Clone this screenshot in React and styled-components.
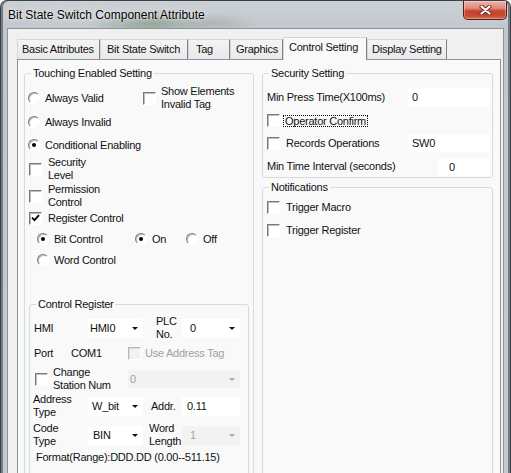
import React from "react";
import styled, { createGlobalStyle } from "styled-components";

const GlobalStyle = createGlobalStyle`
  html, body {
    margin: 0;
    padding: 0;
    background: #ffffff;
  }
  body {
    font-family: "Liberation Sans", Arial, sans-serif;
    font-size: 11px;
    letter-spacing: -0.25px;
    color: #111;
  }
  * {
    box-sizing: border-box;
  }
`;

const Window = styled.div`
  width: 511px;
  height: 473px;
  overflow: hidden;
  display: flex;
  flex-direction: column;
  border: 1px solid #3b4046;
  border-bottom: none;
  border-radius: 7px 7px 0 0;
  background:
    radial-gradient(ellipse 60px 14px at 150px 22px, rgba(80, 110, 70, 0.4), rgba(80, 110, 70, 0)),
    radial-gradient(ellipse 40px 10px at 215px 22px, rgba(90, 95, 90, 0.2), rgba(90, 95, 90, 0)),
    linear-gradient(180deg, #ccd1d6 0px, #c1c7cc 28px, #c6cbd0 100%);
  box-shadow: inset 2px 0 0 #767c82, inset -2px 0 0 #767c82;
`;

const TitleBar = styled.div`
  flex: none;
  height: 27px;
  display: flex;
  align-items: center;
  justify-content: space-between;
  padding: 0 3px 0 7px;
`;

const Title = styled.span`
  font-size: 12px;
  letter-spacing: 0;
  color: #000;
  text-shadow: 0 0 6px rgba(255, 255, 255, 0.9), 0 0 2px rgba(255, 255, 255, 0.8);
`;

const CloseButton = styled.div`
  align-self: flex-start;
  width: 44px;
  height: 19px;
  display: flex;
  align-items: center;
  justify-content: center;
  border: 1px solid #4d2019;
  border-top: none;
  border-radius: 0 0 5px 5px;
  background: linear-gradient(180deg, #ecb4a8 0%, #dd8a7a 40%, #c8412a 56%, #c9482f 80%, #d86c50 100%);
  box-shadow: inset 0 0 0 1px rgba(255, 255, 255, 0.3);
`;

const FrameBody = styled.div`
  flex: 1;
  min-height: 0;
  display: flex;
  padding: 0 6px;
`;

const Client = styled.div`
  flex: 1;
  min-width: 0;
  display: flex;
  flex-direction: column;
  background: #f0f0f0;
  border: 1px solid #8c939a;
  border-bottom: none;
  padding: 8px 2px 0 9px;
`;

const TabStrip = styled.div`
  flex: none;
  height: 22px;
  display: flex;
  align-items: flex-end;
`;

const Tab = styled.div`
  flex: none;
  position: relative;
  width: ${(p) => p.$w}px;
  height: ${(p) => (p.$active ? 23 : 20)}px;
  margin-bottom: ${(p) => (p.$active ? -1 : 0)}px;
  z-index: ${(p) => (p.$active ? 1 : 0)};
  padding-left: ${(p) => p.$pad}px;
  border: 1px solid;
  border-bottom: none;
  border-color: #d2d5d9 #7e8389 transparent #d2d5d9;
  background: ${(p) => (p.$active ? "#f9f9f9" : "linear-gradient(180deg, #f4f4f4, #e9e9e9)")};
  line-height: ${(p) => (p.$active ? 19 : 18)}px;
  white-space: nowrap;
`;

const Panel = styled.div`
  flex: 1;
  min-height: 0;
  overflow: hidden;
  border: 1px solid #8e9399;
  border-bottom: none;
  background: #f9f9f9;
  padding: 7px 7px 0 6px;
  display: grid;
  grid-template-columns: 230px 231px;
  column-gap: 8px;
  align-items: start;
`;

const Column = styled.div`
  display: flex;
  flex-direction: column;
`;

const GroupBox = styled.fieldset`
  margin: ${(p) => p.$m || "0"};
  padding: 0;
  min-width: 0;
  border: 1px solid #d3dce2;
  border-radius: 3px;
  ${(p) => (p.$h ? `height: ${p.$h}px;` : "")}
`;

const Legend = styled.legend`
  margin-left: 6px;
  padding: 0 2px;
  line-height: 13px;
`;

const GroupBody = styled.div`
  padding: ${(p) => p.$pad};
  display: flex;
  flex-direction: column;
`;

const Row = styled.div`
  display: flex;
  align-items: center;
  justify-content: ${(p) => (p.$between ? "space-between" : "flex-start")};
  height: ${(p) => p.$h}px;
  padding-top: ${(p) => p.$pt || 0}px;
`;

const Text = styled.span`
  flex: none;
  width: ${(p) => (p.$w ? `${p.$w}px` : "auto")};
  padding-left: ${(p) => p.$pad || 0}px;
  margin-left: ${(p) => p.$ml || 0}px;
  line-height: 13px;
  white-space: nowrap;
`;

const Option = styled.label`
  flex: none;
  display: flex;
  align-items: center;
  gap: ${(p) => p.$gap}px;
  width: ${(p) => (p.$w ? `${p.$w}px` : "auto")};
  margin-left: ${(p) => p.$ml || 0}px;
  line-height: 13px;
  white-space: nowrap;
  color: ${(p) => (p.$disabled ? "#a0a0a0" : "inherit")};
`;

const RadioCircle = styled.span`
  flex: none;
  width: 12px;
  height: 12px;
  border-radius: 50%;
  border: 1px solid;
  border-color: #7c7c7c #ffffff #ffffff #7c7c7c;
  background: #fff;
  box-shadow: inset 1px 1px 0 #bdbdbd;
  display: flex;
  align-items: center;
  justify-content: center;

  &::after {
    content: "";
    display: ${(p) => (p.$on ? "block" : "none")};
    width: 4px;
    height: 4px;
    border-radius: 50%;
    background: #000;
  }
`;

const Box = styled.span`
  flex: none;
  width: 13px;
  height: 13px;
  border: 1px solid;
  border-color: ${(p) => (p.$disabled ? "#b6b6b6 #fff #fff #b6b6b6" : "#7a7a7a #fff #fff #7a7a7a")};
  box-shadow: inset 1px 1px 0 ${(p) => (p.$disabled ? "#dcdcdc" : "#bcbcbc")};
  background: ${(p) => (p.$disabled ? "#f2f2f2" : "#fff")};
  display: flex;
  align-items: center;
  justify-content: center;
`;

const Focus = styled.span`
  border: 1px dotted #000;
  padding: 0 1px;
  line-height: 10px;
`;

const Field = styled.div`
  flex: none;
  width: ${(p) => p.$w}px;
  height: ${(p) => p.$h || 19}px;
  display: flex;
  align-items: center;
  justify-content: space-between;
  padding: 0 5px 0 ${(p) => p.$pad || 3}px;
  background: ${(p) => (p.$disabled ? "#f2f2f2" : "#ffffff")};
  color: ${(p) => (p.$disabled ? "#a3a3a3" : "inherit")};
`;

const Arrow = styled.span`
  width: 0;
  height: 0;
  border-left: 3px solid transparent;
  border-right: 3px solid transparent;
  border-top: 3px solid ${(p) => (p.$disabled ? "#a8a8a8" : "#111")};
`;

const Radio = ({ on, children, w, ml }) => (
  <Option $gap={5} $w={w} $ml={ml}>
    <RadioCircle $on={on} />
    <span>{children}</span>
  </Option>
);

const Check = ({ on, disabled, children, gap = 6, w, ml, focus }) => (
  <Option $gap={gap} $w={w} $ml={ml} $disabled={disabled}>
    <Box $disabled={disabled}>
      {on && (
        <svg width="9" height="8" viewBox="0 0 9 8">
          <path d="M1 3.6 L3.5 6.2 L8 1.2" fill="none" stroke="#000" strokeWidth="1.8" />
        </svg>
      )}
    </Box>
    {focus ? <Focus>{children}</Focus> : <span>{children}</span>}
  </Option>
);

const Combo = ({ children, w, h, pad, disabled }) => (
  <Field $w={w} $h={h} $pad={pad} $disabled={disabled}>
    <span>{children}</span>
    <Arrow $disabled={disabled} />
  </Field>
);

const tabs = [
  { label: "Basic Attributes", w: 83, pad: 4 },
  { label: "Bit State Switch", w: 88, pad: 6 },
  { label: "Tag", w: 42, pad: 7 },
  { label: "Graphics", w: 53, pad: 5 },
  { label: "Control Setting", w: 84, pad: 5, active: true },
  { label: "Display Setting", w: 80, pad: 4 },
];

export default function App() {
  return (
    <>
      <GlobalStyle />
      <Window>
        <TitleBar>
          <Title>Bit State Switch Component Attribute</Title>
          <CloseButton>
            <svg width="13" height="10" viewBox="0 0 13 10">
              <path d="M2.5 1.5 L10.5 8.5 M10.5 1.5 L2.5 8.5" stroke="#6b2a20" strokeWidth="4" strokeLinecap="round" />
              <path d="M2.5 1.5 L10.5 8.5 M10.5 1.5 L2.5 8.5" stroke="#fff" strokeWidth="2.2" strokeLinecap="round" />
            </svg>
          </CloseButton>
        </TitleBar>

        <FrameBody>
          <Client>
            <TabStrip>
              {tabs.map((t) => (
                <Tab key={t.label} $w={t.w} $pad={t.pad} $active={t.active}>
                  {t.label}
                </Tab>
              ))}
            </TabStrip>

            <Panel>
              {/* left: touching enabled */}
              <GroupBox>
                <Legend>Touching Enabled Setting</Legend>
                <GroupBody $pad="6px 4px 30px">
                  <Row $h={24}>
                    <Radio w={115} ml={-1}>Always Valid</Radio>
                    <Check gap={5}>
                      Show Elements
                      <br />
                      Invalid Tag
                    </Check>
                  </Row>
                  <Row $h={24}>
                    <Radio ml={-1}>Always Invalid</Radio>
                  </Row>
                  <Row $h={22}>
                    <Radio on ml={-1}>Conditional Enabling</Radio>
                  </Row>
                  <Row $h={26}>
                    <Check>
                      Security
                      <br />
                      Level
                    </Check>
                  </Row>
                  <Row $h={28}>
                    <Check>
                      Permission
                      <br />
                      Control
                    </Check>
                  </Row>
                  <Row $h={16}>
                    <Check on>Register Control</Check>
                  </Row>
                  <Row $h={26}>
                    <Radio on w={98} ml={8}>Bit Control</Radio>
                    <Radio on w={51}>On</Radio>
                    <Radio>Off</Radio>
                  </Row>
                  <Row $h={16}>
                    <Radio ml={8}>Word Control</Radio>
                  </Row>

                  <GroupBox $m="30px 0 0 0">
                    <Legend>Control Register</Legend>
                    <GroupBody $pad="5px 7px 30px 4px">
                      <Row $h={24}>
                        <Text $w={54}>HMI</Text>
                        <Combo w={55} pad={2}>HMI0</Combo>
                        <Text $w={39} $pad={13}>
                          PLC
                          <br />
                          No.
                        </Text>
                        <Combo w={58} pad={8}>0</Combo>
                      </Row>
                      <Row $h={26}>
                        <Text $w={37}>Port</Text>
                        <Text $w={57}>COM1</Text>
                        <Check disabled gap={4}>Use Address Tag</Check>
                      </Row>
                      <Row $h={26}>
                        <Check w={93} ml={1} gap={5}>
                          Change
                          <br />
                          Station Num
                        </Check>
                        <Combo disabled w={112} h={18} pad={2}>0</Combo>
                      </Row>
                      <Row $h={28}>
                        <Text $w={55} $ml={-1}>
                          Address
                          <br />
                          Type
                        </Text>
                        <Combo w={55} pad={4}>W_bit</Combo>
                        <Text $w={39} $pad={8}>Addr.</Text>
                        <Field $w={58} $pad={5}>0.11</Field>
                      </Row>
                      <Row $h={30}>
                        <Text $w={55} $ml={-1}>
                          Code
                          <br />
                          Type
                        </Text>
                        <Combo w={55} pad={5}>BIN</Combo>
                        <Text $w={39} $pad={6}>
                          Word
                          <br />
                          Length
                        </Text>
                        <Combo disabled w={58} pad={8}>1</Combo>
                      </Row>
                      <Row $h={14}>
                        <Text $ml={2}>Format(Range):DDD.DD (0.00--511.15)</Text>
                      </Row>
                    </GroupBody>
                  </GroupBox>
                </GroupBody>
              </GroupBox>

              {/* right: security + notifications */}
              <Column>
                <GroupBox>
                  <Legend>Security Setting</Legend>
                  <GroupBody $pad="6px 3px 0 4px">
                    <Row $h={22} $between>
                      <Text>Min Press Time(X100ms)</Text>
                      <Field $w={81} $pad={4}>0</Field>
                    </Row>
                    <Row $h={25}>
                      <Check focus gap={3}>Operator Confirm</Check>
                    </Row>
                    <Row $h={20} $between>
                      <Check>Records Operations</Check>
                      <Field $w={81} $h={18} $pad={4}>SW0</Field>
                    </Row>
                    <Row $h={24} $pt={3} $between>
                      <Text>Min Time Interval (seconds)</Text>
                      <Field $w={51} $h={18} $pad={11}>0</Field>
                    </Row>
                  </GroupBody>
                </GroupBox>

                <GroupBox $m="3px 0 0 0" $h={320}>
                  <Legend>Notifications</Legend>
                  <GroupBody $pad="2px 4px">
                    <Row $h={22}>
                      <Check>Trigger Macro</Check>
                    </Row>
                    <Row $h={24}>
                      <Check>Trigger Register</Check>
                    </Row>
                  </GroupBody>
                </GroupBox>
              </Column>
            </Panel>
          </Client>
        </FrameBody>
      </Window>
    </>
  );
}
